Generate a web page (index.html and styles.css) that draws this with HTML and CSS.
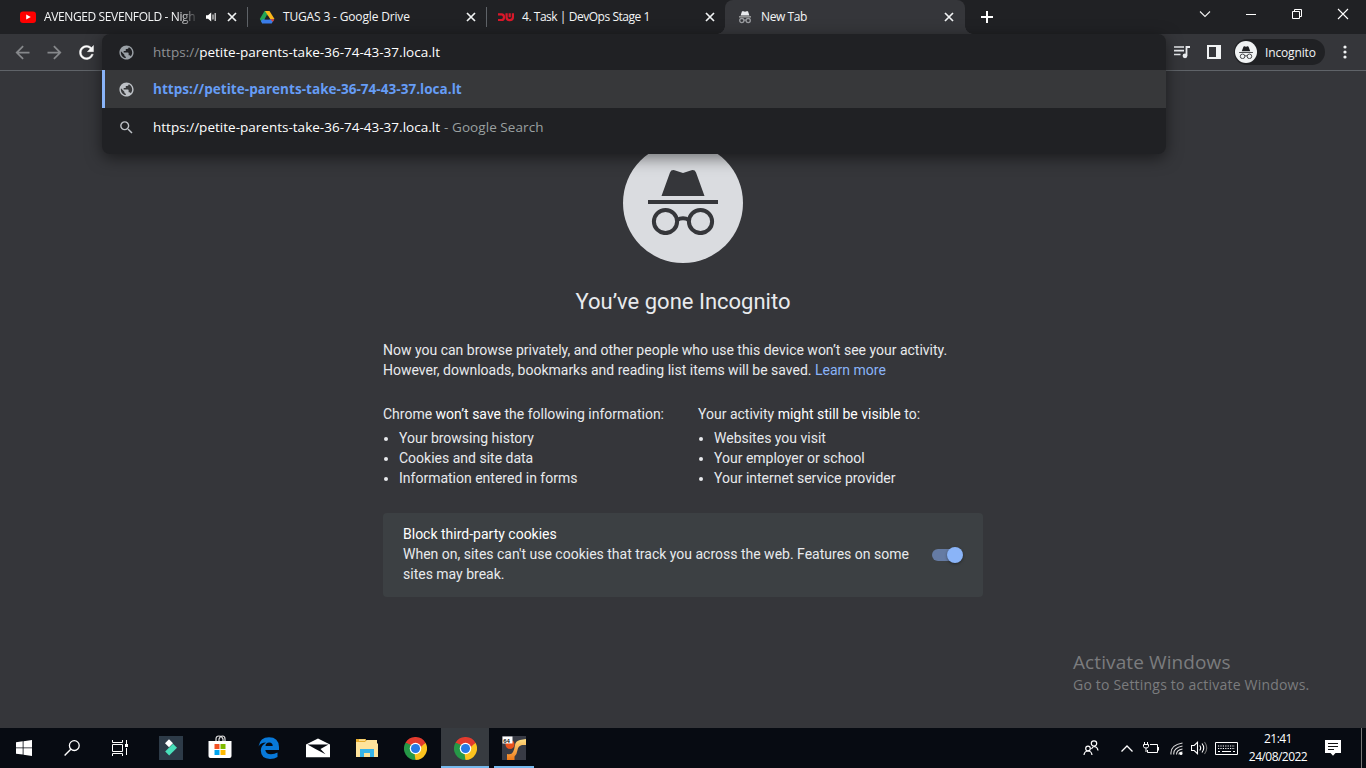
FILE: index.html
```html
<!DOCTYPE html>
<html lang="en">
<head>
<meta charset="utf-8">
<title>New Tab</title>
<link rel="stylesheet" href="styles.css">
</head>
<body>
<svg class="defs" width="0" height="0">
  <defs>
    <symbol id="close" viewBox="0 0 10 10"><path d="M1 1l8 8M9 1L1 9" stroke="#f1f3f4" stroke-width="1.7" fill="none"/></symbol>
    <symbol id="globe" viewBox="0 0 24 24"><path fill="currentColor" d="M12 2C6.48 2 2 6.48 2 12s4.48 10 10 10 10-4.48 10-10S17.52 2 12 2zm-1 17.93c-3.95-.49-7-3.85-7-7.93 0-.62.08-1.21.21-1.79L9 15v1c0 1.1.9 2 2 2v1.93zm6.9-2.54c-.26-.81-1-1.39-1.9-1.39h-1v-3c0-.55-.45-1-1-1H8v-2h2c.55 0 1-.45 1-1V7h2c1.1 0 2-.9 2-2v-.41c2.93 1.19 5 4.06 5 7.41 0 2.08-.8 3.97-2.1 5.39z"/></symbol>
    <symbol id="spy" viewBox="0 0 70 66"><path fill="currentColor" d="M13.500 27L22 3.500Q23.200.5 26.500 1.200L35 4l8.500-2.800Q46.800.5 48 3.500L56.500 27z"/><path fill="currentColor" d="M0 31h70v4H0z"/><g fill="none" stroke="currentColor" stroke-width="4"><circle cx="17.500" cy="52.500" r="11.600"/><circle cx="52.500" cy="52.500" r="11.600"/><path d="M29 51q6-3.500 12 0"/></g></symbol>
    <symbol id="chrome" viewBox="0 0 48 48"><path fill="#e33b2e" d="M24 24L3.200 12a24 24 0 0 1 41.600 0z"/><path fill="#fcc31e" d="M24 24l20.800-12A24 24 0 0 1 24 48z"/><path fill="#269847" d="M24 24v24A24 24 0 0 1 3.200 12z"/><path fill="#e33b2e" d="M24 12h20.800L34 22z"/><path fill="#fcc31e" d="M34.400 30L24 48l-2-13z"/><path fill="#269847" d="M13.600 30L3.200 12 17 17z"/><circle cx="24" cy="24" r="12" fill="#fff"/><circle cx="24" cy="24" r="9.500" fill="#287ae6"/></symbol>
  </defs>
</svg>

<header class="tabs">
  <div class="tab">
    <svg class="fav" viewBox="0 0 16 16"><rect y="2.500" width="16" height="11.500" rx="3" fill="#f00"/><path fill="#fff" d="M6.200 5.600v5l4.600-2.500z"/></svg>
    <span class="tab-title clipped t1">AVENGED SEVENFOLD - Nigh</span>
    <svg class="sound" viewBox="0 0 12 12"><path fill="#fff" d="M1 4.200h2L6.200 1.500v9L3 7.800H1z"/><path d="M8 3.500v5M10.200 2v8" stroke="#ddd" stroke-width="1.200"/></svg>
    <svg class="close"><use href="#close"/></svg>
  </div>
  <div class="tab sep">
    <svg class="fav" viewBox="0 0 16 16"><path fill="#23a455" d="M5.500 2h2.800L10 5 3.500 14.500.8 10z"/><path fill="#fbb61a" d="M6 2h4.500l5 8h-4.300z"/><path fill="#3b7de9" d="M3.800 10.200h11.400l-2.500 4.300H3.200L1.800 12z"/><path fill="#e34133" d="M11.200 10.200h4.200l-1.500 2.500z"/><path fill="#202124" d="M8 5.800l2.800 4.600H5.400z"/></svg>
    <span class="tab-title t2">TUGAS 3 - Google Drive</span>
    <svg class="close"><use href="#close"/></svg>
  </div>
  <div class="tab sep">
    <svg class="fav" viewBox="0 0 16 16"><g fill="none" stroke="#d9182a" stroke-width="2.200"><path d="M0 5.400h3.500q2.500 0 2.500 2.800t-2.500 2.800H0M8.600 4.200v4q0 2.900 3 2.900 3.300 0 3.300-2.900v-4M11.700 4.200v4"/></g></svg>
    <span class="tab-title t3">4. Task | DevOps Stage 1</span>
    <svg class="close"><use href="#close"/></svg>
  </div>
  <div class="tab active">
    <svg class="fav spy-fav" viewBox="0 0 16 16"><path fill="#e8eaed" d="M3.600 6.500L5 2.300h1.500l1.500.5 1.500-.5H11l1.400 4.200z"/><path fill="#aaa" d="M2 7.200h12v1.300H2z"/><g fill="none" stroke="#999b9f" stroke-width="1.300"><circle cx="4.800" cy="11.600" r="2.100"/><circle cx="11.200" cy="11.600" r="2.100"/><path d="M7 11.200h2"/></g></svg>
    <span class="tab-title t4">New Tab</span>
    <svg class="close"><use href="#close"/></svg>
  </div>
  <svg class="plus" viewBox="0 0 12 12"><path d="M6 0v12M0 6h12" stroke="#fff" stroke-width="2"/></svg>
  <div class="win-controls">
    <svg viewBox="0 0 12 12"><path d="M1 3.500l5 5 5-5" fill="none" stroke="#f0f0f0" stroke-width="1.100"/></svg>
    <svg viewBox="0 0 12 12"><path d="M1 6.500h10" stroke="#fff"/></svg>
    <svg viewBox="0 0 12 12"><path d="M1.500 3.500h7v7h-7zM3.500 3.500v-2h7v7h-2" fill="none" stroke="#fff"/></svg>
    <svg viewBox="0 0 12 12"><path d="M1 1l10 10M11 1L1 11" stroke="#fff" stroke-width="1.100"/></svg>
  </div>
</header>

<nav class="toolbar">
  <div class="nav-buttons">
    <svg class="dim" viewBox="0 0 24 24"><path fill="currentColor" d="M20 11H7.830l5.590-5.590L12 4l-8 8 8 8 1.410-1.410L7.830 13H20v-2z"/></svg>
    <svg class="dim" viewBox="0 0 24 24"><path fill="currentColor" d="M4 11h12.170l-5.590-5.590L12 4l8 8-8 8-1.410-1.410L16.170 13H4v-2z"/></svg>
    <svg viewBox="0 0 24 24"><path fill="currentColor" stroke="currentColor" stroke-width=".5" d="M17.650 6.350C16.200 4.900 14.210 4 12 4c-4.420 0-7.990 3.580-7.990 8s3.570 8 7.990 8c3.730 0 6.840-2.550 7.730-6h-2.080c-.82 2.330-3.040 4-5.650 4-3.310 0-6-2.690-6-6s2.690-6 6-6c1.660 0 3.140.69 4.220 1.780L13 11h7V4l-2.350 2.350z"/></svg>
  </div>
  <div class="tools">
    <svg class="queue" viewBox="0 0 16 14"><path d="M0 2h10M0 5.700h10M0 9.500h6.500" stroke="#e8eaed" stroke-width="1.700"/><path d="M16 2h-3.500v8.500" fill="none" stroke="#e8eaed" stroke-width="1.800"/><circle cx="11" cy="10.800" r="2.400" fill="#e8eaed"/></svg>
    <svg class="panel" viewBox="0 0 14 14"><path fill="#f1f3f4" fill-rule="evenodd" d="M0 0h14v14H0zM2 2v10h7V2z"/></svg>
    <div class="profile"><span class="avatar"><svg><use href="#spy"/></svg></span><span>Incognito</span></div>
    <svg class="dots" viewBox="0 0 4 14"><g fill="#f1f3f4"><circle cx="2" cy="2" r="1.600"/><circle cx="2" cy="7" r="1.600"/><circle cx="2" cy="12" r="1.600"/></g></svg>
  </div>
  <section class="omnibox">
    <div class="row input"><svg class="lead"><use href="#globe"/></svg><span class="url"><i>https://</i>petite-parents-take-36-74-43-37.loca.lt</span></div>
    <div class="row selected"><svg class="lead"><use href="#globe"/></svg><b class="match">https://petite-parents-take-36-74-43-37.loca.lt</b></div>
    <div class="row"><svg class="lead" viewBox="0 0 24 24"><path fill="currentColor" d="M15.500 14h-.79l-.28-.27A6.471 6.471 0 0 0 16 9.500 6.500 6.500 0 1 0 9.500 16c1.610 0 3.090-.59 4.230-1.570l.27.280v.79l5 4.990L20.490 19l-4.990-5zm-6 0C7.010 14 5 11.990 5 9.500S7.010 5 9.500 5 14 7.010 14 9.500 11.990 14 9.500 14z"/></svg><span class="url">https://petite-parents-take-36-74-43-37.loca.lt</span><span class="engine">- Google Search</span></div>
  </section>
</nav>

<main class="page">
  <div class="emblem"><svg><use href="#spy"/></svg></div>
  <h1>You’ve gone Incognito</h1>
  <div class="content">
    <p><span class="l1">Now you can browse privately, and other people who use this device won’t see your activity.</span><br><span class="l2">However, downloads, bookmarks and reading list items will be saved. <a>Learn more</a></span></p>
    <div class="columns">
      <div><p>Chrome <em>won’t save</em> the following information:</p><ul><li>Your browsing history</li><li>Cookies and site data</li><li>Information entered in forms</li></ul></div>
      <div><p>Your activity <em>might still be visible</em> to:</p><ul><li>Websites you visit</li><li>Your employer or school</li><li>Your internet service provider</li></ul></div>
    </div>
    <div class="cookies">
      <div><em>Block third-party cookies</em><br>When on, sites can't use cookies that track you across the web. Features on some<br>sites may break.</div>
      <span class="toggle"></span>
    </div>
  </div>
  <aside class="watermark"><div class="wm1">Activate Windows</div><div class="wm2">Go to Settings to activate Windows.</div></aside>
</main>

<footer class="taskbar">
  <div class="system">
    <span><svg width="16" height="16" viewBox="0 0 16 16"><path fill="#fff" d="M0 2.200l6.700-.9v6.200H0zM7.500 1.200L16 0v7.500H7.500zM0 8.300h6.700v6.300L0 13.700zM7.500 8.300H16V16l-8.500-1.200z"/></svg></span>
    <span><svg width="16" height="16" viewBox="0 0 16 16"><circle cx="10.300" cy="5.600" r="4.900" fill="none" stroke="#fff" stroke-width="1.300"/><path d="M6.800 9.200L.6 15.500" stroke="#fff" stroke-width="1.400"/></svg></span>
    <span><svg width="16" height="16" viewBox="0 0 16 16"><g fill="none" stroke="#fff"><path d="M.5 0v2.500h10V0M.5 4.500h10v7H.5zM.5 16v-2.500h10V16M14.500 0v4M14.500 8v7"/></g><path fill="#fff" d="M13 4h3v3h-3z"/></svg></span>
  </div>
  <div class="apps">
    <span><svg width="24" height="24" viewBox="0 0 24 24"><path fill="#2d3b48" d="M0 0h24v24H0z"/><path fill="#fff" d="M10 3.200l4 4-4 4-4-4z"/><path fill="#49dfba" d="M14 7.800l4 4-7.800 7.600-4-4z"/></svg></span>
    <span><svg class="store" width="24" height="24" viewBox="0 0 24 24"><path d="M8 6V4q0-3 3-3t4 3v2M11 6V4q1-3 3.500-3Q17 1 17 4v2" fill="none" stroke="#ddd" stroke-width="1.200"/><path fill="#fff" d="M.5 6h23v15q0 2-2 2h-19q-2 0-2-2z"/><path fill="#f25022" d="M6.500 9h5v5h-5z"/><path fill="#7fba00" d="M12.500 9h5v5h-5z"/><path fill="#00a4ef" d="M6.500 15h5v5h-5z"/><path fill="#ffb900" d="M12.500 15h5v5h-5z"/></svg></span>
    <span><svg width="22" height="22" viewBox="0 0 22 22"><path fill="#0879d9" d="M.5 9.500Q2 .3 11 .3q9.600 0 10 9.700v3H7.300q.6 4.200 5.700 4.300 3.600 0 6.500-1.800v4.600Q16.600 22 12 22 3 21.700 2.800 13.500q0-5 5.200-8Q2.700 5.700.5 9.500zM7.500 9h7.200q0-3.600-3.500-3.600T7.500 9z"/></svg></span>
    <span><svg width="24" height="20" viewBox="0 0 24 20"><path fill="#fff" d="M0 6.500L12 .5l12 6v12.800H0z"/><path fill="#080b12" d="M1.500 6.500h21L14.500 11l5 5.200L9.500 11z"/></svg></span>
    <span><svg width="22" height="20" viewBox="0 0 22 20"><path fill="#e6ac2d" d="M0 1h10v4H0z"/><path fill="#fee39b" d="M0 4h9l1.500-2H21v3.500h1V19H0z"/><path fill="#fff0b9" d="M3 1.500h6v1.200H3z"/><path fill="#37b4e9" d="M4 11h14v8h-4v-4H8v4H4z"/></svg></span>
    <span><svg width="23" height="23"><use href="#chrome"/></svg></span>
    <span class="current"><svg width="23" height="23"><use href="#chrome"/></svg></span>
    <span class="running"><svg width="24" height="24" viewBox="0 0 24 24"><defs><linearGradient id="flame" x2="0" y2="1"><stop stop-color="#ffdf82"/><stop offset="1" stop-color="#ef7817"/></linearGradient></defs><path fill="#383b45" d="M0 0h24v24H0z"/><circle cx="8" cy="8.500" r="4.500" fill="#e8511b"/><path fill="url(#flame)" d="M24 3v6h-4q-4 1-4.500 5t-3 6.500V24H5v-6q4.500 1 6-2t2-7 5-5z"/><path fill="#fff" d="M.5.5h10v7H.5z"/><text class="badge64" x="1.200" y="6.500">64</text></svg></span>
  </div>
  <div class="tray">
    <svg class="people" viewBox="0 0 16 16"><g fill="none" stroke="#fff" stroke-width="1.200"><circle cx="11" cy="3.500" r="2.700"/><circle cx="5" cy="8.500" r="2.300"/><path d="M8.500 9q1-2.500 3-2.500 3 .5 3.500 4M1 15q.5-4 4-4t4 4"/></g></svg>
    <svg class="caret" viewBox="0 0 12 7"><path d="M.5 6.500L6 1l5.500 5.500" fill="none" stroke="#fff" stroke-width="1.300"/></svg>
    <svg class="battery" viewBox="0 0 17 12"><g fill="none" stroke="#fff"><path d="M7 2.500h7.500v8H4.500V8M15.500 5v3.500M1.500 0v2.500M4.500 0v2.500M.5 2.500h5v2q0 1.500-2.500 1.500T.5 4.500zM3 6v4"/></g></svg>
    <svg class="wifi" viewBox="0 0 13 13"><g fill="none" stroke="#ddd" stroke-width="1.100"><path d="M1 12.500Q0 3 12.500 1M3.800 12.500Q3 6 12.500 4M6.500 12.500Q6.500 8 12.500 7M9 12.500Q9 10 12.500 10"/></g><circle cx="11" cy="11.500" r="1.500" fill="#fff"/></svg>
    <svg class="volume" viewBox="0 0 17 14"><g fill="none" stroke="#fff" stroke-width="1.100"><path d="M.5 4.500h2.700L6.500 1.300v11.400L3.200 9.500H.5zM8.700 4.500q2 2.500 0 5M11 2.500q3.500 4.500 0 9"/><path stroke="#777" d="M13.500 1q4.500 6 0 12"/></g></svg>
    <svg class="keyboard" viewBox="0 0 23 13"><path d="M.5.500h22v12H.5z" fill="none" stroke="#fff"/><path d="M3 4h17M3 6.500h17" stroke="#fff" stroke-width="1.200" stroke-dasharray="1.200 1.200"/><path d="M3 9.500h2M7 9.500h9M18 9.500h2" stroke="#fff"/></svg>
    <div class="clock"><div>21:41</div><div class="date">24/08/2022</div></div>
    <svg class="notice" viewBox="0 0 16 16"><path fill="#fff" d="M0 0h16v13h-5.500L8 15.700 5.500 13H0z"/><path d="M3 3.500h10M3 6.500h10M3 9.500h6" stroke="#111"/></svg>
    <span class="desktop-edge"></span>
  </div>
</footer>
</body>
</html>
```
FILE: styles.css
```css
* { box-sizing: border-box; }
body { margin: 0; width: 1366px; height: 768px; overflow: hidden; display: flex; flex-direction: column; background: #35363a; color: #e8eaed; font-family: "Open Sans", "Noto Sans", sans-serif; }
svg { display: block; flex: none; }
.defs { position: absolute; }

.tabs { height: 34px; flex: none; display: flex; align-items: center; padding-left: 8px; background: #202124; font-size: 12px; }
.tab { position: relative; width: 239px; height: 34px; padding: 0 10px 0 12px; display: flex; align-items: center; }
.tab.sep::before { content: ""; position: absolute; left: 0; top: 7px; width: 1px; height: 20px; background: #5f6368; }
.tab.active { width: 240px; padding-right: 11px; background: #35363a; border-radius: 8px 8px 0 0; }
.tab.active::before, .tab.active::after { content: ""; position: absolute; bottom: 0; width: 8px; height: 8px; }
.tab.active::before { left: -8px; background: radial-gradient(circle at 0 0, #202124 7.500px, #35363a 8px); }
.tab.active::after { right: -8px; background: radial-gradient(circle at 100% 0, #202124 7.500px, #35363a 8px); }
.fav { width: 16px; height: 16px; margin-right: 8px; }
.tab-title { flex: 1; white-space: nowrap; color: #f4f5f6; line-height: 18px; }
.clipped { -webkit-mask-image: linear-gradient(to right, #000 134px, transparent 155px); mask-image: linear-gradient(to right, #000 134px, transparent 155px); }
.t1 { letter-spacing: -.38px; }
.t2 { letter-spacing: -.16px; }
.t3 { letter-spacing: -.46px; }
.t4 { letter-spacing: -.4px; }
.sound { width: 12px; height: 12px; margin: 0 10px 0 0; }
.close { width: 10px; height: 10px; }
.plus { width: 12px; height: 12px; margin-left: 16px; }
.win-controls { margin-left: auto; display: flex; gap: 34px; padding: 0 17px 6px 0; }
.win-controls svg { width: 12px; height: 12px; }

.toolbar { position: relative; z-index: 2; height: 37px; flex: none; padding: 0 19px 0 12px; display: flex; justify-content: space-between; align-items: center; border-bottom: 1px solid #5f6368; }
.nav-buttons { display: flex; gap: 11px; color: #fff; }
.nav-buttons svg { width: 21px; height: 21px; }
.nav-buttons .dim { color: #86888b; }
.tools { display: flex; align-items: center; font-size: 12px; color: #f1f3f4; }
.queue { width: 16px; height: 14px; margin-right: 17px; }
.panel { width: 14px; height: 14px; margin-right: 13px; }
.profile { width: 91px; height: 26px; display: flex; align-items: center; gap: 8px; padding-left: 1px; border-radius: 13px; background: #202124; margin-right: 18px; letter-spacing: -.15px; }
.avatar { width: 22px; height: 22px; border-radius: 50%; background: #f1f3f4; color: #202124; display: grid; place-items: center; }
.avatar svg { width: 14px; height: 13px; }
.dots { width: 4px; height: 14px; }

.omnibox { position: absolute; left: 102px; top: 0; width: 1064px; height: 120px; border-radius: 8px; overflow: hidden; background: #202124; font-size: 13.500px; box-shadow: 0 4px 16px rgba(0,0,0,.5); }
.row { height: 38px; padding-left: 16px; display: flex; align-items: center; white-space: nowrap; color: #fff; }
.row.input { height: 36px; }
.row.selected { background: #37383a; border-left: 3px solid #8ab4f8; padding-left: 13px; }
.lead { width: 17px; height: 17px; margin-right: 18px; color: #bdc1c6; }
.input .lead { color: #9aa0a6; }
.url { width: 287px; letter-spacing: .01px; }
.url i { font-style: normal; color: #8f9194; }
.match { color: #669df6; letter-spacing: .04px; }
.engine { margin-left: 4px; color: #9aa0a0; letter-spacing: .07px; }

.page { position: relative; flex: 1; display: flex; flex-direction: column; align-items: center; padding-top: 72px; font: 14px/20px Roboto, sans-serif; }
.emblem { width: 120px; height: 120px; border-radius: 50%; background: #dadce0; color: #35363a; display: flex; justify-content: center; padding-top: 26px; }
.emblem svg { width: 70px; height: 66px; }
h1 { margin: 23px 0 0; font-size: 22px; line-height: 32px; font-weight: 400; }
.content { width: 600px; margin-top: 22px; }
p, ul { margin: 0; }
a { color: #8ab4f8; }
em { font-style: normal; color: #fff; }
.columns { display: grid; grid-template-columns: 315px 285px; margin-top: 24px; }
ul { padding: 4px 0 0 16px; }
.cookies { margin-top: 25px; height: 84px; border-radius: 4px; background: #3c4043; padding: 0 20px; display: flex; align-items: center; justify-content: space-between; }
.cookies > div { padding-bottom: 2px; }
.toggle { position: relative; width: 28px; height: 12px; margin-right: 3px; border-radius: 6px; background: #657ba3; }
.toggle::after { content: ""; position: absolute; right: -3px; top: -2px; width: 16px; height: 16px; border-radius: 50%; background: #8ab4f8; box-shadow: 0 1px 3px rgba(0,0,0,.4); }
.watermark { position: absolute; left: 1073px; top: 578px; color: #7b7c7e; font-family: "Open Sans", sans-serif; white-space: nowrap; }
.wm1 { font-size: 19px; line-height: 26px; letter-spacing: .1px; }
.wm2 { font-size: 14px; line-height: 20px; letter-spacing: .2px; }

.taskbar { height: 40px; flex: none; background: #070b12; display: flex; }
.system, .apps { display: flex; }
.system { width: 146px; }
.system span { width: 48px; display: grid; place-items: center; }
.apps span { width: 49px; display: grid; place-items: center; }
.store { margin-bottom: 2px; }
.apps .current { width: 48px; margin-left: 1px; background: #373b40; box-shadow: inset 0 -2px #76b9ed; }
.apps .running { background: linear-gradient(#76b9ed, #76b9ed) 5px 100% / 40px 2px no-repeat; }
.badge64 { font: bold 6px "Liberation Sans", sans-serif; fill: #111; }
.tray { margin-left: auto; display: flex; align-items: center; }
.people { width: 16px; height: 16px; margin-right: 22px; }
.caret { width: 12px; height: 7px; margin-right: 10px; }
.battery { width: 17px; height: 12px; margin-right: 10px; }
.wifi { width: 13px; height: 13px; margin-right: 8px; }
.volume { width: 17px; height: 14px; margin-right: 7px; }
.keyboard { width: 23px; height: 13px; margin-right: 9px; }
.clock { width: 62px; text-align: center; font-size: 12px; line-height: 18px; color: #fff; letter-spacing: -.54px; white-space: nowrap; }
.notice { width: 16px; height: 16px; margin: 0 20px 0 16px; }
.desktop-edge { width: 1px; height: 40px; background: #777; margin-right: 4px; }
```
